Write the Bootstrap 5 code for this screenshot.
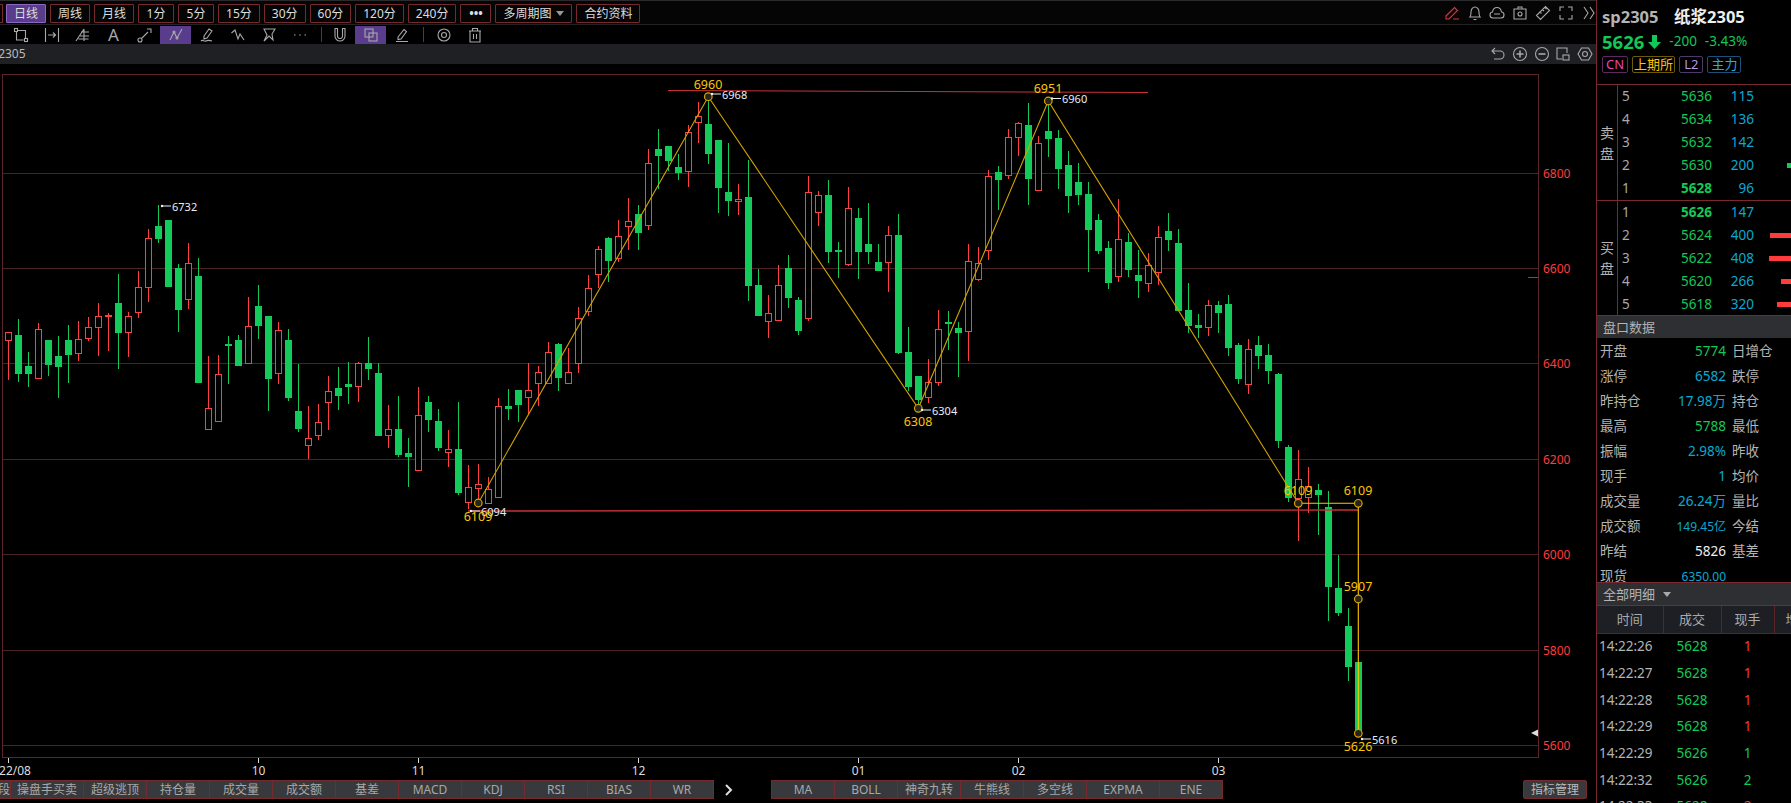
<!DOCTYPE html>
<html lang="zh">
<head>
  <meta charset="UTF-8" />
  <title>sp2305 纸浆2305</title>
  <link href="https://cdn.jsdelivr.net/npm/bootstrap@5.3.3/dist/css/bootstrap.min.css" rel="stylesheet">
  <style>
    html, body { height: 100%; }
    body {
      background: #000;
      color: #bbb;
      font-family: "Noto Sans", "Noto Sans CJK SC", sans-serif;
      overflow: hidden;
    }
    .page { width: 1791px; height: 803px; }
    .main-col { width: 1597px; flex: none; border-right: 1px solid #7a2a2e; overflow: hidden; }
    .side-col { width: 194px; flex: none; overflow: hidden; }

    .top-bar { height: 25px; padding-top: 3px; gap: 4px; border-top: 1px solid #2b2b2e; border-bottom: 1px solid #232326; background: #050506; flex: none; }
    .tf-btn {
      --bs-btn-padding-x: 7px; --bs-btn-padding-y: 0; --bs-btn-font-size: 12px; --bs-btn-border-radius: 1px;
      --bs-btn-color: #ddd; --bs-btn-bg: transparent; --bs-btn-border-color: #752a2e;
      height: 19px; line-height: 16px; min-width: 36px; white-space: nowrap;
    }
    .tf-btn.on { --bs-btn-bg: #5a3c8c; --bs-btn-border-color: #8a68c0; background: #5a3c8c; border-color: #8a68c0; color: #ddd; }
    .tf-stub { width: 4px; margin-left: -1px; margin-right: -1px; min-width: 0; padding: 0; border-left: 0; }
    .tf-more { width: 31px; min-width: 0; padding: 0; }
    .caret-down { display: inline-block; border: 4px solid transparent; border-top: 5px solid #999; border-bottom: 0; margin-left: 5px; vertical-align: 2px; }
    .top-icons { margin-right: -4px; }

    .tool-bar { height: 19px; padding-left: 5px; background: #000; flex: none; }
    .tool { width: 31px; height: 18px; flex: none; display: flex; align-items: center; justify-content: center; color: #aaa; font-size: 17px; line-height: 1; }
    .tool.on { background: #5a3c8c; }
    .tool-sep { width: 1px; height: 15px; background: #7a2a2e; flex: none; }
    .sep-a { margin: 0 2px 0 6px; }
    .sep-b { margin: 0 4.5px 0 5.5px; }
    .ico { width: 16px; height: 16px; fill: none; stroke: #a8a8a8; stroke-width: 1.1; }
    .ico.red { stroke: #e0333a; }
    .top-ico { width: 22.8px; height: 18px; flex: none; display: flex; align-items: center; justify-content: center; }
    .small-ico { width: 21.7px; height: 20px; flex: none; display: flex; align-items: center; justify-content: center; }

    .name-bar { height: 20px; background: #1e2024; font-size: 12px; color: #bbb; line-height: 20px; flex: none; }
    .name-clip { margin-left: -15px; }

    .chart-box { height: 716px; flex: none; }
    .chart-box svg { display: block; }
    .chart-box text { font-family: "Noto Sans", sans-serif; font-size: 11.5px; }
    .lb-yellow { fill: #ffc400; font-size: 12.5px !important; text-anchor: middle; }
    .lb-white { fill: #e6eefc; font-size: 11px !important; }
    .lb-axis { fill: #ff3c3c; font-size: 12px !important; }
    .lb-date { fill: #ddd; font-size: 12px !important; text-anchor: middle; }

    .tab-bar { height: 19px; flex: none; }
    .tab-btn {
      --bs-btn-padding-x: 0; --bs-btn-padding-y: 0; --bs-btn-font-size: 12px; --bs-btn-border-radius: 0;
      --bs-btn-color: #a8a8a8; --bs-btn-bg: #37393d; --bs-btn-border-color: #762a2e;
      width: 64px; height: 19px; line-height: 17px; flex: none !important; white-space: nowrap;
    }
    .tab-wide { width: 74px; }
    .tab-first { margin-left: -53px; }
    .tab-arrow { width: 57px; flex: none; color: #ccc; padding-left: 11px; }
    .tab-manage { width: 64px; margin-left: auto; margin-right: 9px; --bs-btn-border-radius: 2px; color: #bbb; }

    .head-box { height: 85px; border-bottom: 1px solid #7a2a2e; padding: 5px 0 0 5px; flex: none; }
    .sym-line { height: 24px; font-size: 16.5px; font-weight: 700; line-height: 24px; white-space: nowrap; }
    .sym-code { color: #b4b4b4; width: 72px; display: inline-block; }
    .sym-name { color: #eee; }
    .price-line { height: 25px; line-height: 25px; font-size: 13.5px; white-space: nowrap; }
    .price-big { font-size: 18.5px; font-weight: 700; }
    .arrow-down { width: 13px; height: 14px; margin: 0 8px 0 4px; fill: #12c857; }
    .tag-line { gap: 4px; margin-top: 2px; }
    .tag { font-size: 13px; font-weight: 400; line-height: 15px; padding: 0 1px; border-radius: 2px; border: 1px solid; height: 17px; }
    .tag-cn { color: #e545b5; border-color: #5c2a5e; padding: 0 3px; }
    .tag-sh { color: #ffc000; border-color: #6b5a08; }
    .tag-l2 { color: #b398f2; border-color: #4c3a68; padding: 0 4px; }
    .tag-zl { color: #2aa8e8; border-color: #1e4f78; padding: 0 3px; }

    .book-box { height: 116px; border-bottom: 1px solid #7a2a2e; flex: none; }
    .book-box.buy-side { height: 115px; }
    .book-side { width: 21px; flex: none; border-right: 1px solid #7a2a2e; font-size: 14px; line-height: 21px; color: #b4b4b4; text-align: center; }
    .book-row { height: 23px; font-size: 13.5px; }
    .book-num { width: 17px; padding-left: 4px; box-sizing: content-box; color: #aaa; flex: none; font-size: 13.5px; }
    .book-price { width: 73px; text-align: right; flex: none; }
    .book-qty { width: 42px; text-align: right; flex: none; }
    .book-bar { height: 5px; flex: none; margin-left: auto; }

    .sec-head { background: #2e2f33; color: #b4b4b4; font-size: 13px; padding-left: 6px; line-height: 22px; height: 22px; flex: none; white-space: nowrap; }
    .sec-caret { display: inline-block; border: 4px solid transparent; border-top: 5px solid #aaa; border-bottom: 0; margin-left: 8px; vertical-align: 2px; }
    .quote-box { height: 244px; overflow: hidden; flex: none; padding-top: 1px; }
    .quote-row { height: 25px; font-size: 13.5px; line-height: 25px; white-space: nowrap; }
    .quote-key { width: 49px; padding-left: 3px; box-sizing: content-box; flex: none; color: #b4b4b4; }
    .quote-val { width: 77px; text-align: right; flex: none; }
    .quote-key2 { padding-left: 6px; color: #b4b4b4; }
    .tiny { font-size: 12px; }

    .detail-head { border-top: 1px solid #7a2a2e; border-bottom: 1px solid #7a2a2e; height: 24px; line-height: 22px; }
    .tick-wrap { overflow: hidden; flex: 1 1 auto; min-height: 0; }
    .tick-table { width: 237px; table-layout: fixed; --bs-table-bg: transparent; --bs-table-color: #bbb; margin: 0; }
    .tick-table th { background: #1e1f24; color: #aaa; font-size: 13px; font-weight: 400; height: 27px; padding: 0; text-align: center; vertical-align: middle; border: 0; border-right: 1px solid #5a2428; border-bottom: 1px solid #5a2428; white-space: nowrap; }
    .tick-table th.tick-more { text-align: left; padding-left: 11px; }
    .tick-table td { background: transparent; height: 26.7px; padding: 0; text-align: center; vertical-align: middle; font-size: 13.5px; border: 0; white-space: nowrap; }
    .tick-table .tick-time { text-align: left; padding-left: 2px; color: #b4b4b4; }
    .tick-table .c-green, .c-green { color: #12c857; }
    .tick-table .c-red, .c-red { color: #f03a3a; }
    .c-cyan { color: #0aa9d2; }
    .c-white { color: #eee; }
  </style>
</head>
<body>
  <div class="page d-flex">
    <div class="main-col d-flex flex-column">
      <div class="top-bar d-flex">
        <button class="btn btn-sm tf-btn tf-stub"></button>
        <button class="btn btn-sm tf-btn on">日线</button>
        <button class="btn btn-sm tf-btn">周线</button>
        <button class="btn btn-sm tf-btn">月线</button>
        <button class="btn btn-sm tf-btn">1分</button>
        <button class="btn btn-sm tf-btn">5分</button>
        <button class="btn btn-sm tf-btn">15分</button>
        <button class="btn btn-sm tf-btn">30分</button>
        <button class="btn btn-sm tf-btn">60分</button>
        <button class="btn btn-sm tf-btn">120分</button>
        <button class="btn btn-sm tf-btn">240分</button>
        <button class="btn btn-sm tf-btn tf-more fw-bold">•••</button>
        <button class="btn btn-sm tf-btn">多周期图<span class="caret-down"></span></button>
        <button class="btn btn-sm tf-btn">合约资料</button>
        <div class="ms-auto d-flex top-icons">
          <span class="top-ico"><svg class="ico red" viewBox="0 0 16 16"><path d="M2 11 10.500 2.500l3 3L5 14H2zM9 14h6"/></svg></span>
          <span class="top-ico"><svg class="ico" viewBox="0 0 16 16"><path d="M3 12c1-1 1-3 1-5 0-3 2-5 4-5s4 2 4 5c0 2 0 4 1 5zM6.500 14.500h3"/></svg></span>
          <span class="top-ico"><svg class="ico" viewBox="0 0 16 16"><path d="M4 13C2 13 1 11.500 1 10s1-3 2.500-3C4 4 6 2.500 8 2.500s4 1.500 4.500 4.500C14 7 15 8.500 15 10s-1 3-3 3zM5 9h6"/></svg></span>
          <span class="top-ico"><svg class="ico" viewBox="0 0 16 16"><path d="M2 4h12v10H2zM6 4V2h4v2"/><circle cx="8" cy="9" r="2"/></svg></span>
          <span class="top-ico"><svg class="ico" viewBox="0 0 16 16"><path d="M1.500 10.500 10.500 1.500l4 4-9 9zM5 7l1.500 1.500M7.500 4.500 9 6M10 2.500 11.500 4"/></svg></span>
          <span class="top-ico"><svg class="ico" viewBox="0 0 16 16"><path d="M2 6V2h4M10 2h4v4M14 10v4h-4M6 14H2v-4"/></svg></span>
          <span class="top-ico"><svg class="ico" viewBox="0 0 16 16"><path d="M3 2l4 6-4 6M9 2l4 6-4 6"/></svg></span>
        </div>
      </div>

      <div class="tool-bar d-flex align-items-center">
        <span class="tool"><svg class="ico" viewBox="0 0 16 16"><path d="M4 3.500h8.500v8.500M3.500 5v8h7"/><rect x="1.500" y="1.500" width="3" height="3"/><rect x="11.500" y="11.500" width="3" height="3"/></svg></span>
        <span class="tool"><svg class="ico" viewBox="0 0 16 16"><path d="M1.500 1v14M14.500 1v14M4 8h7.500M9 5.500 11.500 8 9 10.500"/></svg></span>
        <span class="tool"><svg class="ico" viewBox="0 0 16 16"><path d="M1 14 9 2M6 5h8M5 9h9M3.500 12h10M9 2v12"/></svg></span>
        <span class="tool">A</span>
        <span class="tool"><svg class="ico" viewBox="0 0 16 16"><path d="M4.500 11.500 11 5"/><circle cx="3" cy="13" r="2"/><path d="M10 2h4v4"/></svg></span>
        <span class="tool on"><svg class="ico" viewBox="0 0 16 16"><path d="M2 13 6 5l3 6 5-9"/><circle cx="6" cy="5" r="1"/><circle cx="9" cy="11" r="1"/></svg></span>
        <span class="tool"><svg class="ico" viewBox="0 0 16 16"><path d="M5 9 10 2l3 2-5 7-3 1zM2 14c2-2 3 1 5 0s3-1 6 0"/></svg></span>
        <span class="tool"><svg class="ico" viewBox="0 0 16 16"><path d="M1.500 6 5 3l3 9 2-5 4 6"/></svg></span>
        <span class="tool"><svg class="ico" viewBox="0 0 16 16"><path d="M3 2h11l-3 5 1 6-4-4-5 5 3-6z"/></svg></span>
        <span class="tool"><svg class="ico" viewBox="0 0 16 16"><path d="M2 8h1.500M7.250 8h1.500M12.500 8H14"/></svg></span>
        <span class="tool-sep sep-a"></span>
        <span class="tool"><svg class="ico" viewBox="0 0 16 16"><path d="M3 1.500V9a5 5 0 0 0 10 0V1.500h-2.500V9a2.500 2.500 0 0 1-5 0V1.500z"/></svg></span>
        <span class="tool on"><svg class="ico" viewBox="0 0 16 16"><rect x="2" y="2" width="8" height="8"/><rect x="6" y="6" width="8" height="8"/></svg></span>
        <span class="tool"><svg class="ico" viewBox="0 0 16 16"><path d="M4 10 10 2.500l2.500 2L7 12l-3 .5zM2 14.500h12"/></svg></span>
        <span class="tool-sep sep-b"></span>
        <span class="tool"><svg class="ico" viewBox="0 0 16 16"><circle cx="8" cy="8" r="6"/><circle cx="8" cy="8" r="2.500"/></svg></span>
        <span class="tool"><svg class="ico" viewBox="0 0 16 16"><path d="M2 4h12M3 4v11h10V4M5.500 4V1.500h5V4M6.500 7v5M9.500 7v5"/></svg></span>
      </div>

      <div class="name-bar d-flex">
        <span class="name-clip">sp2305</span>
        <div class="ms-auto d-flex">
          <span class="small-ico"><svg class="ico" viewBox="0 0 16 16"><path d="M5 2 2 5l3 3M2 5h8a3.500 3.500 0 0 1 0 8H4"/></svg></span>
          <span class="small-ico"><svg class="ico" viewBox="0 0 16 16"><circle cx="8" cy="8" r="6.500"/><path d="M4.500 8h7M8 4.500v7" stroke-width="1.600"/></svg></span>
          <span class="small-ico"><svg class="ico" viewBox="0 0 16 16"><circle cx="8" cy="8" r="6.500"/><path d="M4.500 8h7" stroke-width="1.600"/></svg></span>
          <span class="small-ico"><svg class="ico" viewBox="0 0 16 16"><path d="M7 13H2V2h10v5"/><rect x="8" y="9" width="6" height="5"/></svg></span>
          <span class="small-ico"><svg class="ico" viewBox="0 0 16 16"><path d="M4.500 2h7L15 8l-3.500 6h-7L1 8z"/><circle cx="8" cy="8" r="2.500"/></svg></span>
        </div>
      </div>

      <div class="chart-box"><svg id="chart" width="1596" height="716" viewBox="0 64 1596 716"></svg></div>

      <div class="tab-bar d-flex">
        <div class="btn-group">
          <button class="btn btn-sm tab-btn tab-first text-end">波段</button>
          <button class="btn btn-sm tab-btn tab-wide">操盘手买卖</button>
          <button class="btn btn-sm tab-btn">超级逃顶</button>
          <button class="btn btn-sm tab-btn">持仓量</button>
          <button class="btn btn-sm tab-btn">成交量</button>
          <button class="btn btn-sm tab-btn">成交额</button>
          <button class="btn btn-sm tab-btn">基差</button>
          <button class="btn btn-sm tab-btn">MACD</button>
          <button class="btn btn-sm tab-btn">KDJ</button>
          <button class="btn btn-sm tab-btn">RSI</button>
          <button class="btn btn-sm tab-btn">BIAS</button>
          <button class="btn btn-sm tab-btn">WR</button>
        </div>
        <span class="tab-arrow d-flex align-items-center"><svg width="8" height="12" viewBox="0 0 8 12" fill="none" stroke="#ddd" stroke-width="2"><path d="M1 1l5 5-5 5"/></svg></span>
        <div class="btn-group">
          <button class="btn btn-sm tab-btn">MA</button>
          <button class="btn btn-sm tab-btn">BOLL</button>
          <button class="btn btn-sm tab-btn">神奇九转</button>
          <button class="btn btn-sm tab-btn">牛熊线</button>
          <button class="btn btn-sm tab-btn">多空线</button>
          <button class="btn btn-sm tab-btn tab-wide">EXPMA</button>
          <button class="btn btn-sm tab-btn">ENE</button>
        </div>
        <button class="btn btn-sm tab-btn tab-manage">指标管理</button>
      </div>
    </div>

    <div class="side-col d-flex flex-column">
      <div class="head-box">
        <div class="sym-line"><span class="sym-code">sp2305</span><span class="sym-name">纸浆2305</span></div>
        <div class="price-line d-flex align-items-center c-green">
          <span class="price-big">5626</span>
          <svg class="arrow-down" viewBox="0 0 13 14"><path d="M4 0h5v7h4l-6.500 7L0 7h4z"/></svg>
          <span class="me-2">-200</span><span>-3.43%</span>
        </div>
        <div class="tag-line d-flex">
          <span class="tag tag-cn">CN</span>
          <span class="tag tag-sh">上期所</span>
          <span class="tag tag-l2">L2</span>
          <span class="tag tag-zl">主力</span>
        </div>
      </div>

      <div class="book-box d-flex">
        <div class="book-side d-flex align-items-center justify-content-center">卖<br>盘</div>
        <div class="flex-grow-1">
          <div class="book-row d-flex align-items-center"><span class="book-num">5</span><span class="book-price c-green">5636</span><span class="book-qty c-cyan">115</span></div>
          <div class="book-row d-flex align-items-center"><span class="book-num">4</span><span class="book-price c-green">5634</span><span class="book-qty c-cyan">136</span></div>
          <div class="book-row d-flex align-items-center"><span class="book-num">3</span><span class="book-price c-green">5632</span><span class="book-qty c-cyan">142</span></div>
          <div class="book-row d-flex align-items-center"><span class="book-num">2</span><span class="book-price c-green">5630</span><span class="book-qty c-cyan">200</span><span class="book-bar" style="width:4px;background:#12c857"></span></div>
          <div class="book-row d-flex align-items-center"><span class="book-num">1</span><span class="book-price c-green fw-bold">5628</span><span class="book-qty c-cyan">96</span></div>
        </div>
      </div>
      <div class="book-box buy-side d-flex">
        <div class="book-side d-flex align-items-center justify-content-center">买<br>盘</div>
        <div class="flex-grow-1">
          <div class="book-row d-flex align-items-center"><span class="book-num">1</span><span class="book-price c-green fw-bold">5626</span><span class="book-qty c-cyan">147</span></div>
          <div class="book-row d-flex align-items-center"><span class="book-num">2</span><span class="book-price c-green">5624</span><span class="book-qty c-cyan">400</span><span class="book-bar" style="width:21px;background:#ff3b3b"></span></div>
          <div class="book-row d-flex align-items-center"><span class="book-num">3</span><span class="book-price c-green">5622</span><span class="book-qty c-cyan">408</span><span class="book-bar" style="width:22px;background:#ff3b3b"></span></div>
          <div class="book-row d-flex align-items-center"><span class="book-num">4</span><span class="book-price c-green">5620</span><span class="book-qty c-cyan">266</span><span class="book-bar" style="width:10px;background:#ff3b3b"></span></div>
          <div class="book-row d-flex align-items-center"><span class="book-num">5</span><span class="book-price c-green">5618</span><span class="book-qty c-cyan">320</span><span class="book-bar" style="width:14px;background:#ff3b3b"></span></div>
        </div>
      </div>

      <div class="sec-head">盘口数据</div>
      <div class="quote-box">
        <div class="quote-row d-flex"><span class="quote-key">开盘</span><span class="quote-val c-green">5774</span><span class="quote-key2">日增仓</span></div>
        <div class="quote-row d-flex"><span class="quote-key">涨停</span><span class="quote-val c-cyan">6582</span><span class="quote-key2">跌停</span></div>
        <div class="quote-row d-flex"><span class="quote-key">昨持仓</span><span class="quote-val c-cyan">17.98万</span><span class="quote-key2">持仓</span></div>
        <div class="quote-row d-flex"><span class="quote-key">最高</span><span class="quote-val c-green">5788</span><span class="quote-key2">最低</span></div>
        <div class="quote-row d-flex"><span class="quote-key">振幅</span><span class="quote-val c-cyan">2.98%</span><span class="quote-key2">昨收</span></div>
        <div class="quote-row d-flex"><span class="quote-key">现手</span><span class="quote-val c-cyan">1</span><span class="quote-key2">均价</span></div>
        <div class="quote-row d-flex"><span class="quote-key">成交量</span><span class="quote-val c-cyan">26.24万</span><span class="quote-key2">量比</span></div>
        <div class="quote-row d-flex"><span class="quote-key">成交额</span><span class="quote-val c-cyan tiny">149.45亿</span><span class="quote-key2">今结</span></div>
        <div class="quote-row d-flex"><span class="quote-key">昨结</span><span class="quote-val c-white">5826</span><span class="quote-key2">基差</span></div>
        <div class="quote-row d-flex"><span class="quote-key">现货</span><span class="quote-val c-cyan tiny">6350.00</span></div>
      </div>

      <div class="sec-head detail-head">全部明细<span class="sec-caret"></span></div>
      <div class="tick-wrap">
        <table class="table tick-table">
          <colgroup><col style="width:66px"><col style="width:58px"><col style="width:53px"><col style="width:60px"></colgroup>
          <thead><tr><th>时间</th><th>成交</th><th>现手</th><th class="tick-more">增仓</th></tr></thead>
          <tbody>
            <tr><td class="tick-time">14:22:26</td><td class="c-green">5628</td><td class="c-red">1</td><td></td></tr>
            <tr><td class="tick-time">14:22:27</td><td class="c-green">5628</td><td class="c-red">1</td><td></td></tr>
            <tr><td class="tick-time">14:22:28</td><td class="c-green">5628</td><td class="c-red">1</td><td></td></tr>
            <tr><td class="tick-time">14:22:29</td><td class="c-green">5628</td><td class="c-red">1</td><td></td></tr>
            <tr><td class="tick-time">14:22:29</td><td class="c-green">5626</td><td class="c-green">1</td><td></td></tr>
            <tr><td class="tick-time">14:22:32</td><td class="c-green">5626</td><td class="c-green">2</td><td></td></tr>
            <tr><td class="tick-time">14:22:33</td><td class="c-green">5628</td><td class="c-red">2</td><td></td></tr>
          </tbody>
        </table>
      </div>
    </div>
  </div>

<script src="https://cdn.jsdelivr.net/npm/bootstrap@5.3.3/dist/js/bootstrap.bundle.min.js"></script>
<script>
  // candles: colour, high, top, bottom, low - read off the 3x crops, oy is the crop's top edge
  const groups = [
    { oy: 180, bars: [
      'r455,455,482,600','g418,465,582,606','g517,558,582,620','r430,448,596,596','g480,480,555,588',
      'g468,528,561,654','g435,480,525,609','r423,478,521,543','r411,442,476,483','r370,409,443,528',
      'r400,405,410,513','g282,369,459,567','r396,409,458,531','r273,322,398,414','r148,175,323,366',
      'g75,138,177,189','g120,120,321,321','g252,264,390,456','r189,250,359,387','g234,288,609,609',
      'r528,685,749,749','r525,583,725,725','g468,492,498,612','g465,480,558,558','r351,439,551,551',
      'g315,378,438,477','g408,408,597,693','r426,451,581,612','g447,480,654,663','g552,693,748,756',
      'r678,775,797,837','r672,727,767,780','r588,634,668,750','g561,624,648,690','g546,612,621,672',
      'r546,550,620,666','g471,549,567,600','g549,579,768,768','r675,748,767,804','g648,747,825,831',
      'g774,819,831,921','r621,706,872,872','g648,666,720,756','g687,723,804,813','r750,808,818,861',
      'g666,807,939,945','r855,922,968,987','r852,913,926,960','r891,928,971,971' ] },
    { oy: 330, bars: [
      'r205,229,503,503','g178,229,237,270','g180,180,225,276','r99,181,203,252','r108,127,161,228',
      'r37,67,161,161','g40,42,144,183','r54,127,161,161' ] },
    { oy: 70, bars: [
      'r712,745,881,909','r615,655,725,738','r529,538,614,654','g502,504,573,636','r450,499,566,576',
      'r384,454,470,540','g405,432,489,540','r237,280,467,480','g177,237,258,357','g228,228,273,303',
      'g252,291,309,330','r165,187,305,351','r96,139,158,219','g80,162,252,282','g210,210,354,429',
      'g219,366,393,438','r342,388,395,435','g270,381,648,693','g597,645,738,738','r675,730,755,804',
      'r585,646,752,752','g555,594,684,714','g681,690,783,795','r318,367,746,752','r363,376,428,468',
      'g330,375,546,579','g516,540,546,624','r351,415,585,588','g414,444,546,627','g399,522,546,582',
      'g522,576,603,603','r468,496,578,666','g432,495,849,852','g771,846,951,963','g918,918,990,1002',
      'r867,937,983,999','r720,778,938,948','g723,756,759,840','g756,774,789,921','r522,574,785,873',
      'r531,580,629,633','r300,319,542,570','g288,306,330,420','r178,202,317,327','r156,160,203,258',
      'g99,165,327,405','r198,220,362,362','g100,183,207,261','g180,204,297,357','g243,285,378,429',
      'g279,336,375,405','g336,372,480,606','g432,450,543,552','g513,534,639,657','r387,508,620,636',
      'g489,516,600,621','g540,615,633,684','r549,586,641,666','r468,502,608,645','g429,483,510,543',
      'g477,519,723,723','g639,720,768,789','g732,765,774,804','r690,706,773,798','g693,705,729,789',
      'g675,702,834,858','g820,825,927,942','r807,838,944,972','g798,825,858,897','g822,855,903,942',
      'g909,912,1112,1134' ] },
    { oy: 400, bars: [
      'g135,141,294,306','r150,238,298,423','r201,258,293,339','g252,270,285,405','g273,321,561,663',
      'g465,564,639,648','g624,678,801,843','g786,786,1000,1000' ] }
  ];

  let s = '';
  const line = (x1, y1, x2, y2, c, w) => `<line x1="${x1}" y1="${y1}" x2="${x2}" y2="${y2}" stroke="${c}" stroke-width="${w || 1}"/>`;
  const label = (x, y, t, cls) => `<text x="${x}" y="${y}" class="${cls}">${t}</text>`;

  // grid and frame
  [173.5, 268.5, 363.5, 459.5, 554.5, 650.5, 745.5].forEach(y => { s += line(3, y, 1538, y, '#4b2226'); });
  s += `<rect x="2.5" y="74.5" width="1536" height="683" fill="none" stroke="#5a2428"/>`;
  [[173, 6800], [268, 6600], [363, 6400], [459, 6200], [554, 6000], [650, 5800], [745, 5600]].forEach(a => {
    s += label(1543, a[0] + 4.5, a[1], 'lb-axis');
  });
  s += line(1528, 277.5, 1538, 277.5, '#b83236');
  s += `<path d="M1531 733l7-3.500v7z" fill="#ddd"/>`;

  // date axis
  [[8.5, '22/08', 15], [258.5, '10'], [418.5, '11'], [638.5, '12'], [858.5, '01'], [1018.5, '02'], [1218.5, '03']].forEach(a => {
    s += line(a[0], 758, a[0], 763, '#ddd');
    s += label(a[2] || a[0], 775, a[1], 'lb-date');
  });

  // candles
  let k = 0;
  groups.forEach(g => {
    g.bars.forEach(b => {
      const red = b[0] === 'r';
      const [hi, top, bot, lo] = b.slice(1).split(',').map(n => Math.round(g.oy + n / 3));
      const x = 8.5 + 10 * k;
      if (red) {
        s += line(x, hi, x, top, '#ff4040') + line(x, bot, x, lo, '#ff4040');
        s += `<rect x="${x - 3}" y="${top + 0.5}" width="6" height="${Math.max(bot - top - 1, 1)}" fill="#000" stroke="#ff4040"/>`;
      } else {
        s += line(x, hi, x, lo, '#12c857');
        s += `<rect x="${x - 3.5}" y="${top}" width="7" height="${Math.max(bot - top, 2)}" fill="#12cb5a"/>`;
      }
      k++;
    });
  });

  // drawn lines
  s += line(668, 90.5, 1148, 92.5, '#c8323a');
  s += line(468, 511, 1358, 510, '#c8323a', 1.4);
  s += `<polyline points="478.3,503 708.3,96.7 918.3,408.3 1048.3,101 1298.3,503.3" fill="none" stroke="#d2a400" stroke-width="1.1"/>`;
  s += `<polyline points="1298.3,503.3 1358.3,503.3 1358.3,733.3" fill="none" stroke="#ffc800" stroke-width="1.1"/>`;
  [[478.3, 503], [708.3, 96.7], [918.3, 408.3], [1048.3, 101], [1298.3, 503.3], [1358.3, 503.3], [1358.3, 599], [1358.3, 733.3]].forEach(p => {
    s += `<circle cx="${p[0]}" cy="${p[1]}" r="3.800" fill="#26241c" stroke="#d8a800" stroke-width="1.2"/>`;
  });

  // high / low markers
  [[161, 206, 6732], [711, 94, 6968], [1051, 98.500, 6960], [921, 410, 6304], [470, 511, 6094], [1361, 739, 5616]].forEach(a => {
    s += line(a[0], a[1], a[0] + 10, a[1], '#eee') + `<circle cx="${a[0] + 1}" cy="${a[1]}" r="1.200" fill="#eee"/>`;
    s += label(a[0] + 11, a[1] + 4.5, a[2], 'lb-white');
  });
  [[708, 89, 6960], [1048, 93, 6951], [918, 426, 6308], [478, 521, 6109], [1298, 495, 6109], [1358, 495, 6109], [1358, 591, 5907], [1358, 751, 5626]].forEach(a => {
    s += label(a[0], a[1], a[2], 'lb-yellow');
  });

  document.getElementById('chart').innerHTML = s;
</script>
</body>
</html>
